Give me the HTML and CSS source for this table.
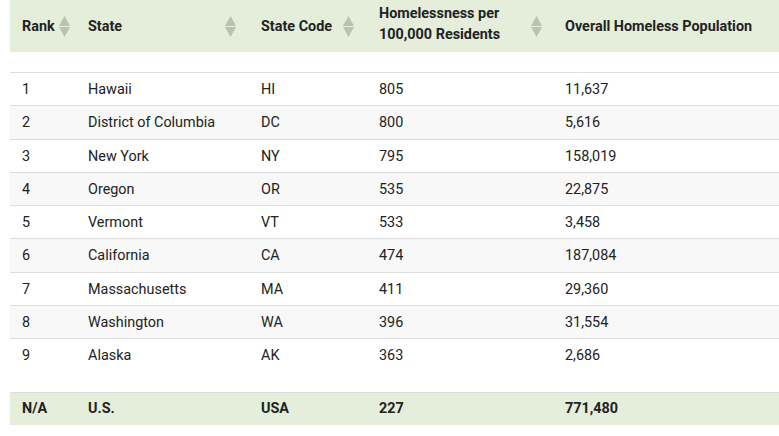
FILE: index.html
```html
<!DOCTYPE html>
<html>
<head>
<meta charset="utf-8">
<link rel="stylesheet" href="styles.css">
</head>
<body>
<div class="wrap">
<table class="tbl">
  <colgroup>
    <col class="c1"><col class="c2"><col class="c3"><col class="c4"><col class="c5">
  </colgroup>
  <thead>
    <tr>
      <th class="th-rank"><div class="th-in"><span>Rank</span><svg class="sort" viewBox="0 0 11 21" width="11" height="21"><polygon points="5.5,0 11,10 0,10"/><polygon points="0,11 11,11 5.5,21"/></svg></div></th>
      <th class="th-pad"><div class="th-in"><span>State</span><svg class="sort" viewBox="0 0 11 21" width="11" height="21"><polygon points="5.5,0 11,10 0,10"/><polygon points="0,11 11,11 5.5,21"/></svg></div></th>
      <th class="th-pad"><div class="th-in"><span>State Code</span><svg class="sort" viewBox="0 0 11 21" width="11" height="21"><polygon points="5.5,0 11,10 0,10"/><polygon points="0,11 11,11 5.5,21"/></svg></div></th>
      <th class="th-two"><div class="th-in"><span class="two">Homelessness per<br>100,000 Residents</span><svg class="sort" viewBox="0 0 11 21" width="11" height="21"><polygon points="5.5,0 11,10 0,10"/><polygon points="0,11 11,11 5.5,21"/></svg></div></th>
      <th class="th-pad"><div class="th-in"><span>Overall Homeless Population</span><svg class="sort" viewBox="0 0 11 21" width="11" height="21"><polygon points="5.5,0 11,10 0,10"/><polygon points="0,11 11,11 5.5,21"/></svg></div></th>
    </tr>
  </thead>
  <tbody>
    <tr class="spacer"><td colspan="5"></td></tr>
    <tr><td>1</td><td>Hawaii</td><td>HI</td><td>805</td><td>11,637</td></tr>
    <tr class="alt"><td>2</td><td>District of Columbia</td><td>DC</td><td>800</td><td>5,616</td></tr>
    <tr><td>3</td><td>New York</td><td>NY</td><td>795</td><td>158,019</td></tr>
    <tr class="alt"><td>4</td><td>Oregon</td><td>OR</td><td>535</td><td>22,875</td></tr>
    <tr><td>5</td><td>Vermont</td><td>VT</td><td>533</td><td>3,458</td></tr>
    <tr class="alt"><td>6</td><td>California</td><td>CA</td><td>474</td><td>187,084</td></tr>
    <tr><td>7</td><td>Massachusetts</td><td>MA</td><td>411</td><td>29,360</td></tr>
    <tr class="alt"><td>8</td><td>Washington</td><td>WA</td><td>396</td><td>31,554</td></tr>
    <tr><td>9</td><td>Alaska</td><td>AK</td><td>363</td><td>2,686</td></tr>
    <tr class="spacer-b"><td colspan="5"></td></tr>
  </tbody>
  <tfoot>
    <tr><td>N/A</td><td>U.S.</td><td>USA</td><td>227</td><td>771,480</td></tr>
  </tfoot>
</table>
</div>
</body>
</html>
```

FILE: styles.css
```css
html, body {
  margin: 0;
  padding: 0;
  background: #ffffff;
}
body {
  font-family: Roboto, "Liberation Sans", Arial, sans-serif;
  font-size: 14.4px;
  color: #222222;
}
.wrap {
  margin-left: 10px;
  width: 769px;
  overflow: hidden;
}
.tbl {
  border-collapse: collapse;
  table-layout: fixed;
  width: 840px;
}
.c1 { width: 66px; }
.c2 { width: 173px; }
.c3 { width: 118px; }
.c4 { width: 186px; }
.c5 { width: 297px; }

thead th {
  background: #e4eedb;
  height: 52px;
  padding: 0 12px 0 12px;
  text-align: left;
  font-weight: 700;
  vertical-align: middle;
  line-height: 21px;
  box-sizing: border-box;
}
.th-rank { padding-right: 6px; }
.th-pad { padding-right: 13px; }
.th-two { padding-right: 11px; padding-bottom: 4px; }
.th-in {
  display: flex;
  align-items: center;
  justify-content: space-between;
}
.th-two .sort { margin-top: 4px; }
.two { line-height: 21.5px; }
.sort { fill: #b8c2ae; flex: none; }

tbody td, tfoot td {
  padding: 6px 12px;
  line-height: 20.25px;
  border-top: 1px solid #dddddd;
  vertical-align: middle;
  white-space: nowrap;
}
tbody td {
  padding-top: 7px;
  padding-bottom: 5px;
}
tbody tr.alt td { background: #f8f8f8; }
tbody tr.spacer td {
  border-top: none;
  padding: 0;
  height: 20px;
  line-height: 0;
}
tbody tr.spacer-b td {
  border-top: none;
  padding: 0;
  height: 20.5px;
  line-height: 0;
}
tfoot td {
  background: #e4eedb;
  font-weight: 700;
  line-height: 20px;
}
```
